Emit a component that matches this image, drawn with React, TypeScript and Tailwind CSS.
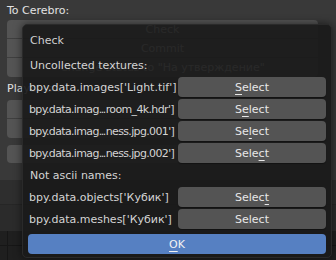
import React from 'react';

// one letter of the label carries Blender's accelerator underline
function Key({ text, at }: { text: string; at: number }) {
  if (at < 0) return <>{text}</>;
  return (
    <>
      {text.slice(0, at)}
      <span className="underline decoration-1 underline-offset-[3px]">{text[at]}</span>
      {text.slice(at + 1)}
    </>
  );
}

// Blender squeezes clipped names into the column
function Clip({ name }: { name: string }) {
  const parts = name.split('...');
  if (parts.length < 2) return <>{name}</>;
  return (
    <span className="tracking-[-0.65px]">
      {parts[0]}
      <span className="tracking-[-1.5px]">...</span>
      <span className="pl-[1px]">{parts[1]}</span>
    </span>
  );
}

const textures = [
  { name: "bpy.data.images['Light.tif']", key: 0 },
  { name: "bpy.data.imag...room_4k.hdr']", key: 1 },
  { name: "bpy.data.imag...ness.jpg.001']", key: 2 },
  { name: "bpy.data.imag...ness.jpg.002']", key: 4 },
];

const names = [
  { name: "bpy.data.objects['Кубик']", key: 5 },
  { name: "bpy.data.meshes['Кубик']", key: -1 },
];

function Row({ name, k }: { name: string; k: number }) {
  return (
    <div className="flex h-[22px] items-center">
      <span className="w-[150px] shrink-0 whitespace-nowrap pl-[1px] text-[#d4d4d4]">
        <Clip name={name} />
      </span>
      <button className="flex h-[20px] flex-1 items-center justify-center rounded-[4px] bg-[#545454] text-[#e8e8e8] shadow-[0_1px_1px_rgba(0,0,0,0.35)]">
        <Key text="Select" at={k} />
      </button>
    </div>
  );
}

export default function App() {
  return (
    <div
      className="relative h-[260px] w-[336px] overflow-hidden bg-[#393939] text-[11px] leading-none"
      style={{ fontFamily: '"DejaVu Sans", "Noto Sans", sans-serif' }}
    >
      {/* panel underneath */}
      <div className="flex h-[20px] items-center px-[7px] text-[#e2e2e2]">To Cerebro:</div>
      <div className="mx-[7px] flex w-[311px] flex-col overflow-hidden rounded-[4px] bg-[#545454] text-[#e2e2e2]">
        <div className="flex h-[19px] items-center justify-center border-b border-[#3f3f3f]">Check</div>
        <div className="flex h-[19px] items-center justify-center border-b border-[#3f3f3f]">Commit</div>
        <div className="flex h-[19px] items-center justify-center">Change status to "На утверждение"</div>
      </div>
      <div className="flex h-[23px] items-center px-[7px] text-[#e2e2e2]">Playblast:</div>
      <div className="mx-[7px] flex w-[311px] flex-col overflow-hidden rounded-[4px] bg-[#545454]">
        <div className="h-[19px] border-b border-[#3f3f3f]" />
        <div className="h-[19px]" />
      </div>
      <div className="mx-[7px] mt-[7px] h-[18px] w-[311px] rounded-[4px] bg-[#545454]" />
      <div className="h-[17px]" />
      <div className="h-[25px] border-b border-[#262626] bg-[#2e2e2e]" />
      <div className="h-[26px] bg-[#2b2b2b]" />
      <div className="grid h-[30px] grid-cols-[7px_1fr] grid-rows-[14px_1fr] gap-px bg-[#161616]">
        <div className="bg-[#1f1f1f]" />
        <div className="bg-[#1f1f1f]" />
        <div className="bg-[#1f1f1f]" />
        <div className="bg-[#1f1f1f]" />
      </div>

      {/* popup */}
      <div className="absolute left-[22px] top-[24px] flex h-[234px] w-[310px] flex-col rounded-[5px] border border-[#2a2a2a] bg-[#1a1a1a]/[0.93] px-[5px] pt-[4px] shadow-[0_0_8px_rgba(0,0,0,0.55)]">
        <div className="mb-[3px] flex h-[22px] items-center pl-[2px] text-[#cfcfcf]">Check</div>
        <div className="flex h-[22px] items-center pl-[2px] text-[#d4d4d4]">Uncollected textures:</div>
        {textures.map((t, i) => (
          <Row key={i} name={t.name} k={t.key} />
        ))}
        <div className="flex h-[22px] items-center pl-[2px] text-[#d4d4d4]">Not ascii names:</div>
        {names.map((t, i) => (
          <Row key={i} name={t.name} k={t.key} />
        ))}
        <button className="mt-[4px] flex h-[20px] items-center justify-center rounded-[4px] bg-[#5680c2] text-[#f2f2f2]">
          <Key text="OK" at={0} />
        </button>
      </div>
    </div>
  );
}
